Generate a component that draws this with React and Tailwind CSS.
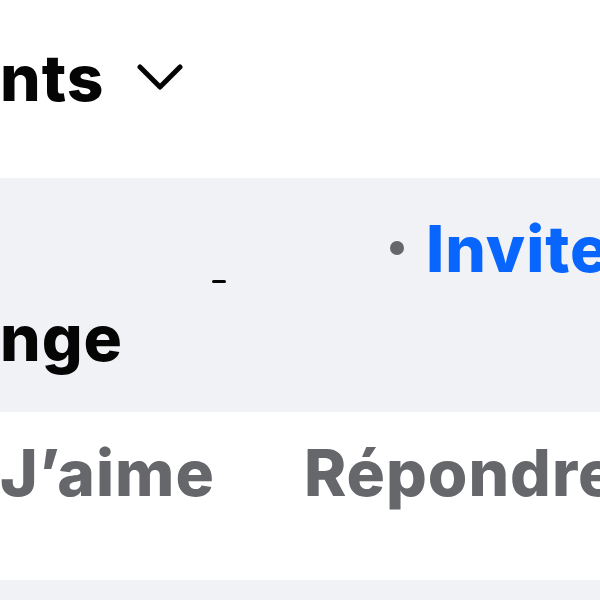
import React from 'react';

const Chevron = () => (
  <svg width="46" height="28" viewBox="0 0 46 28" fill="none">
    <path d="M3 3 L23 23 L43 3" stroke="#050505" strokeWidth="5" strokeLinecap="round" strokeLinejoin="round" />
  </svg>
);

export default function App() {
  return (
    <div className="w-[600px] h-[600px] overflow-hidden bg-white font-['Inter','Liberation_Sans',sans-serif] text-[64px] leading-none font-extrabold tracking-[1px] text-[#050505]">
      {/* header: sort selector */}
      <div className="h-[178px] flex items-start pt-[46px] whitespace-nowrap">
        <span>nts</span>
        <span className="ml-[33px] mt-[18px]">
          <Chevron />
        </span>
      </div>

      {/* comment bubble */}
      <div className="h-[234px] bg-[#f0f2f5] flex flex-col whitespace-nowrap">
        <div className="h-[110px] flex items-start pt-[39px]">
          <div className="w-[212px] shrink-0" />
          <div className="mt-[63px] w-[14px] h-[3px] shrink-0 bg-[#050505] rounded-sm" />
          <div className="ml-[164px] mt-[24px] w-[14px] h-[14px] shrink-0 rounded-full bg-[#65676b]" />
          <span className="ml-[22px] shrink-0 text-[#0866ff]">Invite</span>
        </div>
        <div className="pt-[18px]">
          <span>nge</span>
        </div>
      </div>

      {/* actions */}
      <div className="h-[168px] flex items-start pt-[29px] text-[#65676b] whitespace-nowrap">
        <span className="shrink-0">J’aime</span>
        <span className="ml-[89px] shrink-0">Répondre</span>
      </div>

      <div className="h-[40px] bg-[#f0f2f5]" />
    </div>
  );
}
